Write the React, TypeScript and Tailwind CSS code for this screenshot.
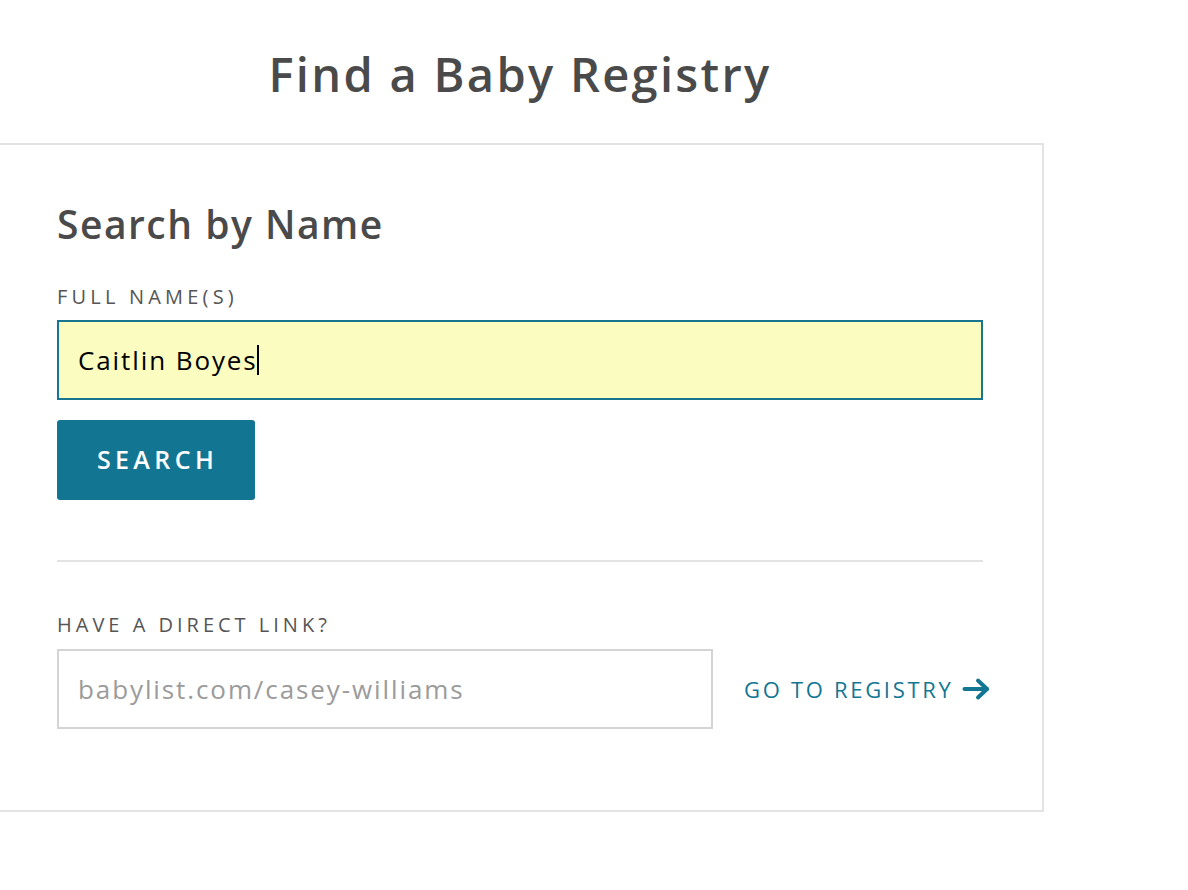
const App = () => {
  return (
    <div className="min-h-[890px] w-[1188px] overflow-hidden bg-white text-[#4a4a4a] font-['Open_Sans',sans-serif]">
      <h1 className="pt-[46px] h-[143px] w-[1048px] ml-[-4px] text-center text-[47px] leading-[56px] font-semibold tracking-[2.3px]">
        Find a Baby Registry
      </h1>

      {/* Search card */}
      <div className="ml-[-4px] w-[1048px] h-[669px] border-2 border-[#e3e3e3] pl-[59px] pr-[60px] pt-[55px]">
        <h2 className="text-[39px] leading-[48px] font-semibold tracking-[1.5px]">Search by Name</h2>

        <label className="block mt-[37px] text-[20px] leading-[24px] tracking-[4.2px] text-[#555]">FULL NAME(S)</label>
        <div className="mt-[11px] h-[80px] w-[926px] border-2 border-[#16758f] bg-[#fafcc0] flex items-center pl-[19px]">
          <span className="text-[26px] text-black tracking-[1.9px]">Caitlin Boyes</span>
          <span className="ml-[-1px] h-[30px] w-[2px] bg-black" />
        </div>

        <button className="mt-[20px] h-[80px] w-[198px] rounded-[3px] bg-[#127693] text-white text-[25px] font-semibold tracking-[4.4px] pl-[3px]">
          SEARCH
        </button>

        <div className="mt-[60px] h-[2px] w-[926px] bg-[#e3e3e3]" />

        <label className="block mt-[51px] text-[20px] leading-[24px] tracking-[4px] text-[#555]">HAVE A DIRECT LINK?</label>
        <div className="mt-[12px] flex items-center">
          <div className="shrink-0 h-[80px] w-[656px] border-2 border-[#d4d4d4] flex items-center pl-[19px]">
            <span className="text-[26px] text-[#9b9b9b] tracking-[1.9px]">babylist.com/casey-williams</span>
          </div>
          <a className="ml-[31px] flex items-center whitespace-nowrap text-[22px] text-[#127693] tracking-[2.7px]">
            GO TO REGISTRY
            <svg className="ml-[8px] shrink-0" width="29" height="24" viewBox="0 0 29 24" fill="none" stroke="#127693" strokeWidth="4" strokeLinecap="round" strokeLinejoin="round">
              <path d="M2.5 12h22.5" />
              <path d="M16 3.5l9 8.5-9 8.5" />
            </svg>
          </a>
        </div>
      </div>
    </div>
  );
};

export default App;
